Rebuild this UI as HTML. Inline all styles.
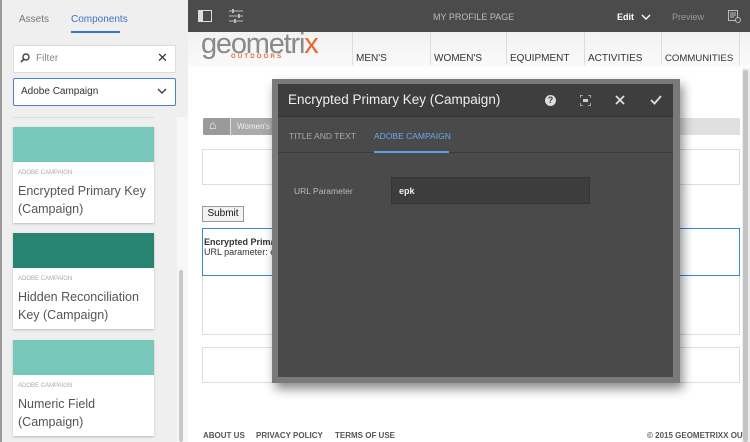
<!DOCTYPE html>
<html><head><meta charset="utf-8"><style>
*{margin:0;padding:0;box-sizing:border-box}
body{width:750px;height:442px;overflow:hidden;position:relative;font-family:"Liberation Sans",sans-serif;background:#fff}
.a{position:absolute}
</style></head><body>
<div class="a" style="left:0;top:0;width:188px;height:442px;background:#efefef"></div>
<div class="a" style="left:0;top:0;width:2px;height:442px;background:#9a9a9a"></div>
<div class="a" style="left:19px;top:14px;font-size:10px;color:#777">Assets</div>
<div class="a" style="left:71px;top:14px;font-size:10px;color:#3a73c9">Components</div>
<div class="a" style="left:71px;top:31px;width:49px;height:2px;background:#3a73c9"></div>
<div class="a" style="left:13px;top:45px;width:163px;height:28px;background:#fff;border:1px solid #ddd"></div>
<svg class="a" style="left:20px;top:53px" width="10" height="10" viewBox="0 0 10 10"><circle cx="6" cy="4" r="3" fill="none" stroke="#444" stroke-width="1.4"/><path d="M4 6 L1 9" stroke="#444" stroke-width="1.6"/></svg>
<div class="a" style="left:36px;top:53px;font-size:10px;color:#888">Filter</div>
<div class="a" style="left:157px;top:50px;font-size:13px;color:#333">✕</div>
<div class="a" style="left:13px;top:78px;width:163px;height:28px;background:#fff;border:1px solid #4a7fd0;border-radius:2px"></div>
<div class="a" style="left:21px;top:86px;font-size:10px;color:#333">Adobe Campaign</div>
<svg class="a" style="left:157px;top:88px" width="10" height="7"><path d="M1 1 L5 5 L9 1" fill="none" stroke="#444" stroke-width="1.5"/></svg>
<div class="a" style="left:13px;top:117px;width:141px;height:1px;background:#ddd"></div>
<div class="a" style="left:177px;top:117px;width:11px;height:325px;background:#f7f7f7"></div>
<div class="a" style="left:179px;top:270px;width:4px;height:172px;background:#c8c8c8;border-radius:2px"></div>

<div class="a" style="left:13px;top:127px;width:141px;height:96px;background:#fff;box-shadow:0 1px 2px #bbb"></div>
<div class="a" style="left:13px;top:127px;width:141px;height:35px;background:#77c8bb"></div>
<div class="a" style="left:18px;top:170px;font-size:6px;color:#aaa">ADOBE CAMPAIGN</div>
<div class="a" style="left:18px;top:182px;font-size:12.5px;line-height:18px;color:#555">Encrypted Primary Key<br>(Campaign)</div>

<div class="a" style="left:13px;top:233px;width:141px;height:96px;background:#fff;box-shadow:0 1px 2px #bbb"></div>
<div class="a" style="left:13px;top:233px;width:141px;height:35px;background:#268470"></div>
<div class="a" style="left:18px;top:276px;font-size:6px;color:#aaa">ADOBE CAMPAIGN</div>
<div class="a" style="left:18px;top:288px;font-size:12.5px;line-height:18px;color:#555">Hidden Reconciliation<br>Key (Campaign)</div>

<div class="a" style="left:13px;top:340px;width:141px;height:96px;background:#fff;box-shadow:0 1px 2px #bbb"></div>
<div class="a" style="left:13px;top:340px;width:141px;height:35px;background:#77c8bb"></div>
<div class="a" style="left:18px;top:383px;font-size:6px;color:#aaa">ADOBE CAMPAIGN</div>
<div class="a" style="left:18px;top:395px;font-size:12.5px;line-height:18px;color:#555">Numeric Field<br>(Campaign)</div>

<div class="a" style="left:188px;top:0;width:562px;height:32px;background:#4b4b4b"></div>
<svg class="a" style="left:198px;top:10px" width="14" height="12"><rect x="0.5" y="0.5" width="13" height="11" fill="none" stroke="#ddd"/><rect x="1" y="1" width="4" height="10" fill="#ddd"/></svg>
<svg class="a" style="left:229px;top:9px" width="14" height="14"><path d="M0 2h14M0 7h14M0 12h14" stroke="#bbb"/><rect x="3" y="0" width="2" height="4" fill="#bbb"/><rect x="9" y="5" width="2" height="4" fill="#bbb"/><rect x="5" y="10" width="2" height="4" fill="#bbb"/></svg>
<div class="a" style="left:433px;top:12px;font-size:9px;color:#bbb">MY PROFILE PAGE</div>
<div class="a" style="left:617px;top:12px;font-size:9px;font-weight:bold;color:#fff">Edit</div>
<svg class="a" style="left:641px;top:14px" width="10" height="6"><path d="M1 1 L5 5 L9 1" fill="none" stroke="#fff" stroke-width="1.4"/></svg>
<div class="a" style="left:672px;top:12px;font-size:9px;color:#999">Preview</div>
<svg class="a" style="left:728px;top:10px" width="13" height="13"><rect x="0.5" y="0.5" width="9" height="10" fill="none" stroke="#bbb"/><path d="M2 3h6M2 5h6M2 7h4" stroke="#bbb"/><circle cx="10" cy="10" r="2.5" fill="#4b4b4b" stroke="#bbb"/></svg>

<div class="a" style="left:188px;top:32px;width:562px;height:35px;background:linear-gradient(#f2f2f2,#fafafa)"></div>
<div class="a" style="left:201px;top:28px;font-size:29px;color:#8a8a8a;letter-spacing:-1.2px;font-weight:300">geometri<span style="color:#e8672f">x</span></div>
<div class="a" style="left:231px;top:54px;font-size:6px;font-weight:bold;color:#e8672f;letter-spacing:2.2px">OUTDOORS</div>
<div class="a" style="left:352px;top:32px;width:1px;height:33px;background:#ddd"></div>
<div class="a" style="left:430px;top:32px;width:1px;height:33px;background:#ddd"></div>
<div class="a" style="left:506px;top:32px;width:1px;height:33px;background:#ddd"></div>
<div class="a" style="left:584px;top:32px;width:1px;height:33px;background:#ddd"></div>
<div class="a" style="left:661px;top:32px;width:1px;height:33px;background:#ddd"></div>
<div class="a" style="left:739px;top:32px;width:1px;height:33px;background:#ddd"></div>
<div class="a" style="left:356px;top:53px;font-size:10px;color:#333;white-space:nowrap">MEN'S</div>
<div class="a" style="left:434px;top:53px;font-size:10px;color:#333">WOMEN'S</div>
<div class="a" style="left:510px;top:53px;font-size:10px;color:#333">EQUIPMENT</div>
<div class="a" style="left:588px;top:53px;font-size:10px;color:#333">ACTIVITIES</div>
<div class="a" style="left:665px;top:53px;font-size:9.6px;color:#333">COMMUNITIES</div>
<div class="a" style="left:742px;top:68px;width:8px;height:374px;background:#eee"></div>
<div class="a" style="left:743px;top:70px;width:5px;height:372px;background:#c4c4c4;border-radius:2px"></div>

<div class="a" style="left:203px;top:118px;width:537px;height:17px;background:#e0e0e0"></div>
<div class="a" style="left:203px;top:118px;width:27px;height:17px;background:#9a9a9a;border-radius:2px 0 0 2px"></div>
<div class="a" style="left:231px;top:118px;width:50px;height:17px;background:#aaa"></div>
<div class="a" style="left:209px;top:118px;font-size:12px;color:#fff">⌂</div>
<div class="a" style="left:237px;top:122px;font-size:8px;color:#eee">Women's</div>
<div class="a" style="left:202px;top:149px;width:538px;height:36px;border:1px solid #ddd"></div>
<div class="a" style="left:202px;top:206px;width:42px;height:16px;border:1px solid #999;background:#f2f2f2;font-size:10px;color:#111;text-align:center;line-height:14px">Submit</div>
<div class="a" style="left:202px;top:228px;width:538px;height:48px;border:1px solid #3a84d8"></div>
<div class="a" style="left:204px;top:237px;font-size:9px;font-weight:bold;color:#333">Encrypted Primary</div>
<div class="a" style="left:204px;top:247px;font-size:9px;color:#333">URL parameter: epk</div>
<div class="a" style="left:202px;top:276px;width:538px;height:59px;border:1px solid #ddd;border-top:none"></div>
<div class="a" style="left:202px;top:347px;width:538px;height:36px;border:1px solid #ddd"></div>
<div class="a" style="left:203px;top:431px;font-size:8px;font-weight:bold;color:#555;white-space:nowrap">ABOUT US</div>
<div class="a" style="left:256px;top:431px;font-size:8px;font-weight:bold;color:#555;white-space:nowrap">PRIVACY POLICY</div>
<div class="a" style="left:335px;top:431px;font-size:8px;font-weight:bold;color:#555;white-space:nowrap">TERMS OF USE</div>
<div class="a" style="left:647px;top:431px;font-size:8px;font-weight:bold;color:#555;white-space:nowrap">© 2015 GEOMETRIXX OU</div>

<div class="a" style="left:272px;top:79px;width:408px;height:304px;background:#7a7a7a;box-shadow:3px 6px 10px rgba(0,0,0,.45)"></div>
<div class="a" style="left:278px;top:84px;width:395px;height:293px;background:#4a4a4a"></div>
<div class="a" style="left:278px;top:84px;width:395px;height:33px;background:#3e3e3e;border-bottom:1px solid #333"></div>
<div class="a" style="left:288px;top:92px;font-size:13.5px;color:#eee">Encrypted Primary Key (Campaign)</div>
<div class="a" style="left:545px;top:95px;width:11px;height:11px;border-radius:50%;background:#ddd;color:#3e3e3e;font-size:9px;font-weight:bold;text-align:center;line-height:11px">?</div>
<svg class="a" style="left:580px;top:95px" width="11" height="11"><path d="M0 3V0h3M8 0h3v3M11 8v3H8M3 11H0V8" fill="none" stroke="#ccc" stroke-width="1.3"/><rect x="3" y="4" width="5" height="3" fill="#ccc"/></svg>
<svg class="a" style="left:615px;top:95px" width="10" height="10"><path d="M1 1L9 9M9 1L1 9" stroke="#ddd" stroke-width="1.8"/></svg>
<svg class="a" style="left:650px;top:95px" width="12" height="10"><path d="M1 5L4.5 8.5L11 1" fill="none" stroke="#ddd" stroke-width="1.8"/></svg>
<div class="a" style="left:278px;top:152px;width:395px;height:1px;background:#3a3a3a"></div>
<div class="a" style="left:289px;top:131px;font-size:8.5px;color:#aaa">TITLE AND TEXT</div>
<div class="a" style="left:374px;top:131px;font-size:8.5px;color:#6aa6f0">ADOBE CAMPAIGN</div>
<div class="a" style="left:374px;top:151px;width:75px;height:2px;background:#5c9ce8"></div>
<div class="a" style="left:294px;top:186px;font-size:8.5px;color:#bbb">URL Parameter</div>
<div class="a" style="left:391px;top:177px;width:199px;height:27px;background:#3d3d3d;border:1px solid #353535"></div>
<div class="a" style="left:399px;top:186px;font-size:9px;font-weight:bold;color:#eee">epk</div>
</body></html>
